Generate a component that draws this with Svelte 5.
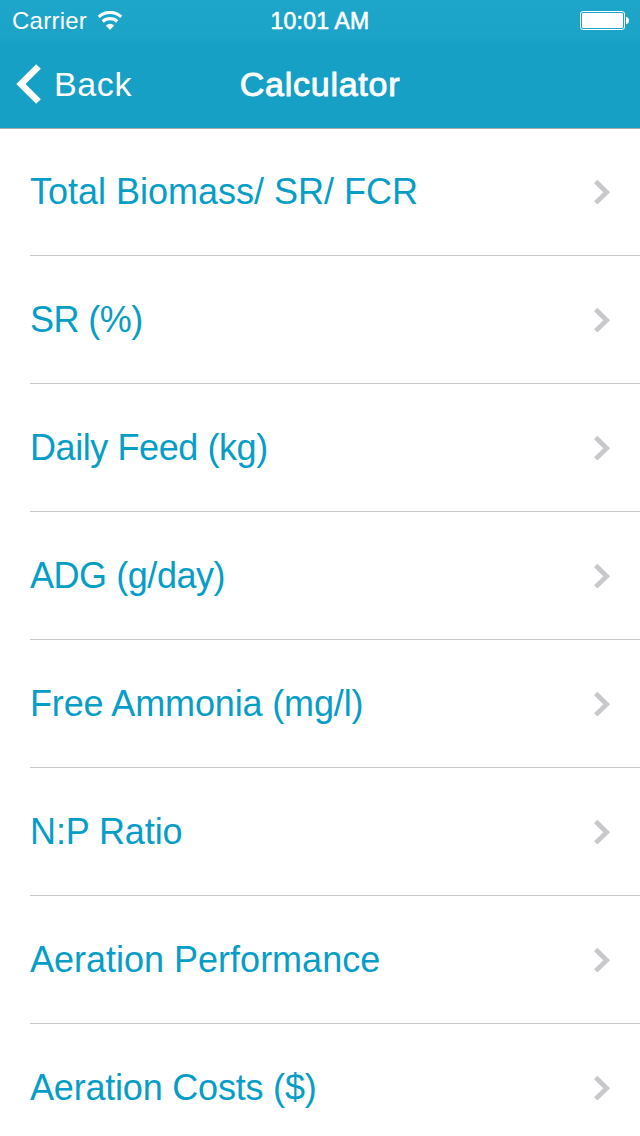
<script lang="ts">
  interface Calculation {
    title: string;
    spacing: number; // letter spacing in px
  }

  const calculations: Calculation[] = [
    { title: 'Total Biomass/ SR/ FCR', spacing: 0 },
    { title: 'SR (%)', spacing: -0.55 },
    { title: 'Daily Feed (kg)', spacing: -0.42 },
    { title: 'ADG (g/day)', spacing: -0.45 },
    { title: 'Free Ammonia (mg/l)', spacing: -0.14 },
    { title: 'N:P Ratio', spacing: -0.1 },
    { title: 'Aeration Performance', spacing: 0 },
    { title: 'Aeration Costs ($)', spacing: -0.2 }
  ];
</script>

<div class="screen">
  <header>
    <div class="status-bar">
      <div class="carrier">
        <span>Carrier</span>
        <svg class="wifi" width="26" height="20" viewBox="0 0 26 20" fill="none" stroke="#fff" stroke-width="3.1">
          <path d="M1.700 5.900a16.500 16.500 0 0 1 22.600 0" />
          <path d="M5.700 10.500a10.700 10.700 0 0 1 14.600 0" />
          <path d="M13 18.900l-4.200-4.400a6 6 0 0 1 8.400 0z" fill="#fff" stroke="none" />
        </svg>
      </div>
      <span class="time">10:01 AM</span>
      <svg class="battery" width="50" height="20" viewBox="0 0 50 20">
        <rect x="0.5" y="0.5" width="44" height="18" rx="2.5" fill="none" stroke="#fff" />
        <rect x="2" y="2" width="41" height="15" rx="1.2" fill="#fff" />
        <path d="M46 6h1q2 1 2 3.500t-2 3.500h-1z" fill="#fff" />
      </svg>
    </div>

    <nav>
      <button class="back">
        <svg width="25" height="40" viewBox="0 0 25 40" fill="none" stroke="#fff" stroke-width="6.6">
          <path d="M22.500 2.500L5 20l17.500 17.500" />
        </svg>
        <span>Back</span>
      </button>
      <h1>Calculator</h1>
    </nav>
  </header>

  <ul>
    {#each calculations as item}
      <li>
        <span class="title" style="letter-spacing: {item.spacing}px">{item.title}</span>
        <svg class="chevron" width="18" height="26" viewBox="0 0 18 26" fill="none" stroke="#c7c7cc" stroke-width="4.800">
          <path d="M1.700 2.500l11 10.700-11 10.700" />
        </svg>
      </li>
    {/each}
  </ul>
</div>

<style>
  :global(body) {
    margin: 0;
    background: #fff;
  }

  .screen {
    width: 640px;
    height: 1136px;
    overflow: hidden;
    background: #fff;
    font-family: "Liberation Sans", Arial, sans-serif;
  }

  header {
    box-sizing: border-box;
    height: 128px;
    color: #fff;
    background: linear-gradient(#1ea5ca 0, #1ba3c8 38px, #16a0c6 46px, #16a0c6 100%);
    box-shadow: 0 1px 0 #a7acae;
  }

  .status-bar {
    box-sizing: border-box;
    display: grid;
    grid-template-columns: 1fr auto 1fr;
    align-items: center;
    height: 40px;
    padding: 2px 10px 0 12px;
    font-size: 24px;
  }

  .carrier {
    display: flex;
    align-items: center;
    gap: 10px;
    letter-spacing: 0.25px;
  }

  .time {
    margin-right: 2px;
    font-size: 23px;
    letter-spacing: 0.2px;
    -webkit-text-stroke: 0.6px #fff;
  }

  .battery {
    justify-self: end;
  }

  nav {
    display: grid;
    grid-template-columns: 1fr auto 1fr;
    align-items: center;
    height: 88px;
    padding: 0 16px;
  }

  .back {
    display: flex;
    align-items: center;
    gap: 13px;
    padding: 0;
    border: 0;
    background: none;
    color: inherit;
    font: inherit;
    font-size: 34px;
    letter-spacing: 0.6px;
  }

  h1 {
    margin: 0;
    font-size: 34px;
    font-weight: normal;
    letter-spacing: 0.75px;
    -webkit-text-stroke: 0.9px #fff;
  }

  ul {
    margin: 0;
    padding: 0 0 0 30px;
    list-style: none;
  }

  li {
    box-sizing: border-box;
    display: flex;
    align-items: center;
    justify-content: space-between;
    height: 128px;
    padding-right: 28px;
    border-bottom: 1px solid #c8c7cc;
  }

  .title {
    padding-top: 1px;
    color: #069dc6;
    font-size: 36px;
    white-space: nowrap;
  }
</style>
